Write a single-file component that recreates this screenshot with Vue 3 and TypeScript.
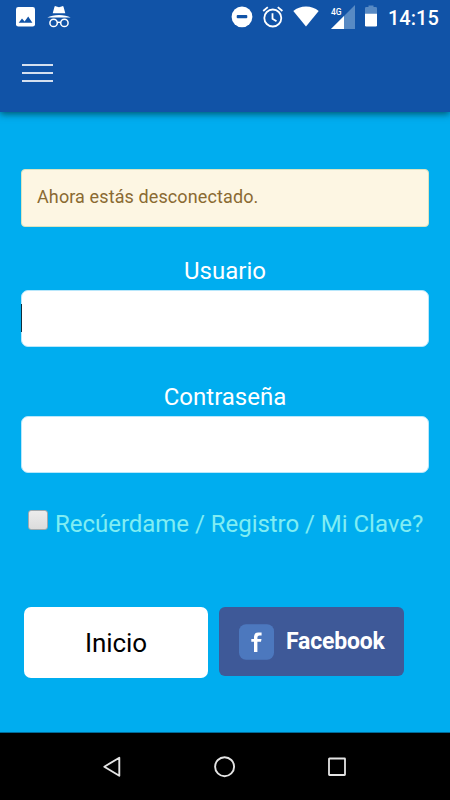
<script setup lang="ts">
import { ref } from 'vue'

const time = ref<string>('14:15')
const username = ref<string>('')
const password = ref<string>('')
const remember = ref<boolean>(false)
</script>

<template>
  <div class="screen">
    <header class="top">
      <div class="status">
        <svg class="picture" width="19" height="20" viewBox="0 0 19 20">
          <rect width="19" height="19.500" rx="2.3" fill="#fff" />
          <path d="M2.7 15.8 6 11.4l2.6 3 3.6-4.8 4.2 6.2z" fill="#1153a7" />
        </svg>
        <svg class="incognito" width="24" height="22" viewBox="0 0 24 22">
          <path d="M5.700 7.200 7.500.7q.3-.8 1.100-.5L12 1.300l3.400-1.100q.8-.3 1.100.5l1.800 6.500z" fill="#fff" />
          <path d="M.3 11.600Q5 9 12 9t11.700 2.600z" fill="#fff" />
          <g fill="none" stroke="#fff" stroke-width="1.500">
            <circle cx="6.600" cy="16.900" r="3.700" />
            <circle cx="17.400" cy="16.900" r="3.700" />
            <path d="M10.200 16.600q1.800-.8 3.600 0" />
          </g>
        </svg>
        <span class="grow"></span>
        <svg class="dnd" width="22" height="22" viewBox="0 0 22 22">
          <circle cx="11" cy="10.800" r="10.4" fill="#fff" />
          <rect x="5.7" y="9.1" width="10.600" height="3.2" rx="1" fill="#1153a7" />
        </svg>
        <svg class="alarm" width="22" height="22" viewBox="0 0 22 22">
          <g fill="none" stroke="#fff" stroke-width="1.800">
            <circle cx="10.800" cy="12" r="8.5" />
            <path d="M1.2 5 5.8 1.1M20.400 5 15.800 1.1M10.5 7.3v5.400l4 2.5" />
          </g>
        </svg>
        <svg class="wifi" width="26" height="21" viewBox="0 0 26 21">
          <path d="M.3 5Q5.5.5 13 .5T25.700 5L13 20.500z" fill="#fff" />
        </svg>
        <div class="signal">
          <svg width="24" height="24" viewBox="0 0 24 24">
            <path d="M24 0v24H0z" fill="#588ac4" />
            <path d="M13 11v13H0z" fill="#fff" />
          </svg>
          <span class="network">4G</span>
        </div>
        <svg class="battery" width="12" height="22" viewBox="0 0 12 22">
          <path d="M1.300 2h2.200V.5h5V2h2.200Q12 2 12 3.300V9H0V3.300Q0 2 1.300 2z" fill="#588ac4" />
          <path d="M0 8.800h12v11.400q0 1.300-1.300 1.300H1.300Q0 21.500 0 20.200z" fill="#fff" />
        </svg>
        <span class="time">{{ time }}</span>
      </div>
      <button class="menu" type="button" aria-label="Menú">
        <i></i><i></i><i></i>
      </button>
    </header>

    <main class="content">
      <div class="notice"><span>Ahora estás desconectado.</span></div>
      <form @submit.prevent>
        <label class="label" for="user">Usuario</label>
        <div class="field">
          <input id="user" v-model="username" type="text" autocomplete="off" />
          <span class="caret"></span>
        </div>
        <label class="label second" for="pass">Contraseña</label>
        <div class="field">
          <input id="pass" v-model="password" type="password" autocomplete="off" />
        </div>
        <div class="options">
          <input v-model="remember" class="check" type="checkbox" aria-label="Recúerdame" />
          <span class="links">Recúerdame / Registro / Mi Clave?</span>
        </div>
        <div class="actions">
          <button class="login" type="submit">Inicio</button>
          <button class="facebook" type="button">
            <svg width="35" height="36" viewBox="0 0 35 36">
              <rect y=".2" width="35" height="35.600" rx="7" fill="#4c78be" />
              <path d="M15 28v-10.200h-2.700v-2.800H15v-2.200q0-4.300 4.300-4.300h3.300v2.900h-2.100q-2.100 0-2.100 2.100v1.500h4.100l-.5 2.800h-3.600V28z" fill="#fff" />
            </svg>
            <span>Facebook</span>
          </button>
        </div>
      </form>
    </main>

    <nav class="nav">
      <svg width="20" height="22" viewBox="0 0 20 22">
        <path d="M18.300 1.700v18L3.300 10.700z" fill="none" stroke="#e4e4e4" stroke-width="1.900" stroke-linejoin="round" />
      </svg>
      <svg width="22" height="22" viewBox="0 0 22 22">
        <circle cx="10.600" cy="10.700" r="9.500" fill="none" stroke="#e4e4e4" stroke-width="1.900" />
      </svg>
      <svg width="18" height="20" viewBox="0 0 18 20">
        <rect x="1" y="1.500" width="16" height="16.500" rx=".4" fill="none" stroke="#e4e4e4" stroke-width="1.800" />
      </svg>
    </nav>
  </div>
</template>

<style>
body {
  margin: 0;
  background: #00adef;
}
</style>

<style scoped>
* {
  box-sizing: border-box;
}
.screen {
  width: 450px;
  height: 800px;
  display: flex;
  flex-direction: column;
  overflow: hidden;
  background: #00adef;
  font-family: Roboto, "Liberation Sans", sans-serif;
}
svg {
  display: block;
  flex: none;
}
button {
  font-family: inherit;
  border: 0;
  padding: 0;
}
.top {
  flex: none;
  height: 112px;
  background: #1153a7;
  box-shadow: 0 2px 7px rgba(0, 50, 50, 0.7);
}
.status {
  height: 34px;
  padding: 5px 10px 0 16px;
  display: flex;
  align-items: flex-start;
}
.picture {
  margin-top: 2px;
}
.incognito {
  margin: 1px 0 0 12px;
}
.grow {
  flex: 1;
}
.dnd {
  margin-top: 1px;
}
.alarm {
  margin: 1px 0 0 9px;
}
.wifi {
  margin: 1px 0 0 9px;
}
.signal {
  position: relative;
  margin-left: 12px;
}
.network {
  position: absolute;
  left: 0;
  top: 3px;
  font-size: 8.5px;
  line-height: 8px;
  font-weight: 500;
  color: #fff;
}
.battery {
  margin: 0 0 0 10px;
}
.time {
  width: 52px;
  margin-left: 11px;
  margin-top: 1px;
  font-size: 20px;
  line-height: 24px;
  font-weight: 500;
  color: #fff;
  white-space: nowrap;
}
.menu {
  display: flex;
  flex-direction: column;
  gap: 6px;
  width: 31px;
  margin: 30px 0 0 22px;
  background: none;
}
.menu i {
  height: 2px;
  background: #d5e0ef;
}
.content {
  flex: 1;
  padding: 57px 21px 0;
}
.notice {
  height: 58px;
  padding: 0 15px 2px;
  display: flex;
  align-items: center;
  border: 1px solid #d9e3bf;
  border-radius: 4px;
  background: #fdf6e3;
  color: #8a6a32;
  font-size: 18px;
  line-height: 24px;
  letter-spacing: 0.11px;
}
.label {
  display: block;
  margin-top: 29px;
  height: 34px;
  color: #fff;
  font-size: 24px;
  line-height: 30px;
  text-align: center;
}
.label.second {
  margin-top: 35.5px;
}
.field {
  position: relative;
  height: 56.5px;
}
.field input {
  display: block;
  width: 100%;
  height: 100%;
  padding: 0 12px;
  border: 1px solid #b8e7fb;
  border-radius: 7px;
  background: #fff;
  font: 24px Roboto, sans-serif;
  outline: none;
}
.caret {
  position: absolute;
  left: 0;
  top: 14px;
  width: 1px;
  height: 28px;
  background: #102d3b;
}
.options {
  display: flex;
  align-items: flex-start;
  margin-top: 35.5px;
  padding-left: 7px;
  height: 36px;
}
.check {
  appearance: none;
  flex: none;
  width: 20px;
  height: 20px;
  margin: 2px 7px 0 0;
  border: 1px solid #9fa9ae;
  border-radius: 3px;
  background: linear-gradient(#ececec, #dcdcdc);
}
.links {
  margin-top: 1px;
  color: #80edf3;
  font-size: 24px;
  line-height: 30px;
  letter-spacing: -0.03px;
  white-space: nowrap;
}
.actions {
  display: flex;
  align-items: flex-start;
  gap: 11px;
  margin-top: 63.4px;
  padding-left: 3px;
}
.login {
  width: 184px;
  height: 70.5px;
  border-radius: 7px;
  background: #fff;
  color: #000;
  font-size: 26px;
  letter-spacing: -0.1px;
}
.facebook {
  display: flex;
  align-items: center;
  gap: 12px;
  width: 184.5px;
  height: 69px;
  padding-left: 20px;
  border-radius: 6px;
  background: #3e5998;
  color: #fff;
  font-size: 23px;
  font-weight: 700;
  letter-spacing: -0.2px;
}
.facebook span {
  margin-top: -1px;
}
.nav {
  flex: none;
  display: flex;
  justify-content: space-between;
  align-items: center;
  height: 68px;
  padding: 0 104px 0 101px;
  border-top: 1px solid #006a98;
  background: #000;
}
</style>
